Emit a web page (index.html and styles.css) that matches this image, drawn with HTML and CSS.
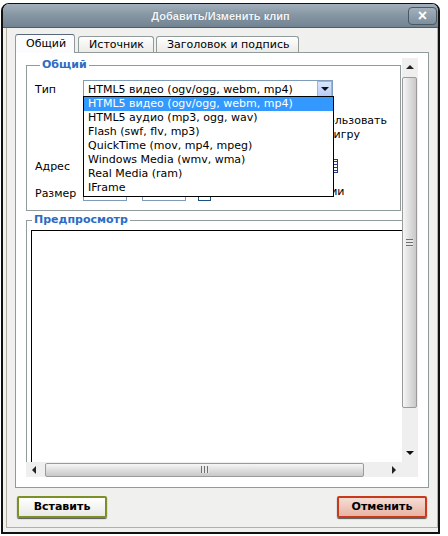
FILE: index.html
```html
<!DOCTYPE html>
<html lang="ru">
<head>
<meta charset="utf-8">
<title>Добавить/Изменить клип</title>
<link rel="stylesheet" href="styles.css">
</head>
<body>
<div class="window">
  <div class="titlebar">
    <span class="spacer"></span>
    <span class="title">Добавить/Изменить клип</span>
    <span class="close">×</span>
  </div>
  <div class="frame">
    <div class="tabs">
      <span class="tab active">Общий</span>
      <span class="tab">Источник</span>
      <span class="tab">Заголовок и подпись</span>
    </div>
    <div class="panel">
      <div class="scroller">
        <div class="viewport">
          <fieldset class="fs fs-general">
            <legend>Общий</legend>
            <div class="row row-type">
              <span class="lbl">Тип</span>
              <div class="select">
                <span class="select-text">HTML5 видео (ogv/ogg, webm, mp4)</span>
                <span class="select-btn"><span class="tri-down"></span></span>
                <ul class="listbox">
                  <li class="sel">HTML5 видео (ogv/ogg, webm, mp4)</li>
                  <li>HTML5 аудио (mp3, ogg, wav)</li>
                  <li>Flash (swf, flv, mp3)</li>
                  <li>QuickTime (mov, mp4, mpeg)</li>
                  <li>Windows Media (wmv, wma)</li>
                  <li>Real Media (ram)</li>
                  <li>IFrame</li>
                </ul>
              </div>
            </div>
            <div class="row row-opts">
              <div class="opt-line l1">Использовать</div>
              <div class="opt-line l2">проигру</div>
            </div>
            <div class="row row-url">
              <span class="lbl">Адрес</span>
              <span class="input url"></span>
              <svg class="browse" width="14" height="14" viewBox="0 0 14 14">
                <rect x="0.5" y="0.5" width="13" height="13" fill="#fff" stroke="#2a3f7a"/>
                <path d="M9 2.5h4M9 5.5h4M9 8.5h4M9 11.5h4" stroke="#2a3f7a" stroke-width="1"/>
                <path d="M3 4h4M3 7h4M3 10h4" stroke="#6d7fae" stroke-width="1"/>
              </svg>
            </div>
            <div class="row row-size">
              <span class="lbl">Размер</span>
              <span class="input num"></span>
              <span class="times">x</span>
              <span class="input num"></span>
              <span class="check"></span>
              <span class="keep">Сохранять пропорции</span>
            </div>
          </fieldset>
          <fieldset class="fs fs-preview">
            <legend>Предпросмотр</legend>
            <div class="preview"></div>
          </fieldset>
        </div>
        <div class="vbar">
          <span class="sb-btn v"><span class="tri-up"></span></span>
          <span class="thumb-v"><span class="grip-v"></span></span>
          <span class="sb-btn v down"><span class="tri-down"></span></span>
        </div>
        <div class="hbar">
          <span class="sb-btn h"><span class="tri-left"></span></span>
          <span class="thumb-h"><span class="grip-h"></span></span>
          <span class="sb-btn h right"><span class="tri-right"></span></span>
        </div>
        <div class="corner"></div>
      </div>
    </div>
    <div class="buttons">
      <span class="btn insert">Вставить</span>
      <span class="btn cancel">Отменить</span>
    </div>
  </div>
</div>
</body>
</html>
```
FILE: styles.css
```css
* { box-sizing: border-box; }
html, body { margin: 0; padding: 0; }
body {
  background: #fff;
  font-family: "DejaVu Sans", Verdana, sans-serif;
  font-size: 11px;
  color: #000;
  width: 448px;
  height: 536px;
  overflow: hidden;
}

.window {
  margin: 3px 0 0 1px;
  width: 439px;
  height: 531px;
  border: 2px solid #111;
  border-top-width: 1px;
  border-radius: 8px 8px 0 0;
  background: #f0f0ee;
  overflow: hidden;
  display: flex;
  flex-direction: column;
}

.titlebar {
  height: 24px;
  flex: none;
  display: grid;
  grid-template-columns: 31px 1fr 31px;
  align-items: center;
  background: linear-gradient(#a2b0bc, #8797a4 45%, #728392);
  border-bottom: 1px solid #4e5d69;
}
.title {
  text-align: center;
  font-family: "Liberation Sans", Arial, sans-serif;
  font-weight: bold;
  font-size: 11px;
  color: #f2f5f8;
  text-shadow: 0 0 1px #56656f;
}
.close {
  justify-self: start;
  margin-left: 1px;
  width: 29px;
  height: 18px;
  border: 1px solid #4a5864;
  border-radius: 4px;
  background: linear-gradient(#a3b1bd, #7d8e9c);
  color: #fff;
  font-family: "Liberation Sans", Arial, sans-serif;
  font-weight: bold;
  font-size: 16px;
  line-height: 15px;
  text-align: center;
}

.frame {
  flex: 1;
  margin: 0 0 4px 3px;
  border: 1px solid #b8afa2;
  border-top: none;
  padding: 6px 0 0 8px;
}

.tabs {
  display: flex;
  align-items: flex-end;
  height: 18px;
}
.tab {
  height: 16px;
  line-height: 15px;
  padding: 0 9px 0 10px;
  margin-right: 2px;
  border: 1px solid #919b9c;
  border-bottom: none;
  border-radius: 3px 3px 0 0;
  background: linear-gradient(#fefefe, #ecebe6);
  white-space: nowrap;
}
.tab.active {
  position: relative;
  z-index: 1;
  height: 19px;
  margin-bottom: -1px;
  margin-right: 3px;
  padding: 0 8px 0 10px;
  line-height: 17px;
  border-top: 1px solid #56687a;
  background: #fcfcfe;
}

.panel {
  width: 414px;
  height: 436px;
  border: 1px solid #919b9c;
  background: #fff;
  padding: 5px 9px 0 10px;
}

.scroller {
  display: grid;
  grid-template-columns: 376px 16px;
  grid-template-rows: 404px 15px;
  width: 392px;
}

.viewport {
  overflow: hidden;
  position: relative;
}

.fs {
  margin: 0;
  padding: 0;
  border: 1px solid #919b9c;
}
.fs legend {
  margin-left: 5px;
  padding: 0 2px;
  line-height: 14px;
  font-weight: bold;
  color: #2b6cc4;
}
.fs-general {
  width: 375px;
  padding: 0 0 8px 8px;
}
.fs-preview {
  width: 400px;
  margin-top: 2px;
  height: 320px;
}

.row {
  display: flex;
  align-items: center;
}
.lbl {
  width: 48px;
  flex: none;
}
.row-type { margin-top: 8px; height: 18px; }
.row-opts {
  margin-top: 16px;
  height: 28px;
  flex-direction: column;
  align-items: stretch;
  padding-left: 48px;
}
.opt-line { height: 14px; line-height: 14px; text-align: right; white-space: nowrap; }
.opt-line.l1 { width: 304px; }
.opt-line.l2 { width: 277px; }
.row-url { margin-top: 16px; height: 16px; }
.row-size { margin-top: 11px; height: 17px; align-items: flex-start; }
.row-size .keep, .row-size .times { line-height: 14px; }
.row-size .lbl { line-height: 14px; padding-top: 2px; }

.select {
  position: relative;
  width: 250px;
  height: 18px;
  border: 1px solid #7f9db9;
  background: #fff;
  display: flex;
  align-items: center;
  padding-left: 4px;
}
.select-text { flex: 1; white-space: nowrap; line-height: 15px; }
.select-btn {
  width: 15px;
  height: 16px;
  border: 1px solid #9cb4de;
  background: linear-gradient(#d9e5fc, #b9cdf7);
  display: flex;
  align-items: center;
  justify-content: center;
}
.tri-down, .tri-up, .tri-left, .tri-right { width: 0; height: 0; display: block; }
.tri-down { border-left: 4px solid transparent; border-right: 4px solid transparent; border-top: 4px solid #111; }
.tri-up { border-left: 4px solid transparent; border-right: 4px solid transparent; border-bottom: 4px solid #222; }
.tri-left { border-top: 4px solid transparent; border-bottom: 4px solid transparent; border-right: 4px solid #222; }
.tri-right { border-top: 4px solid transparent; border-bottom: 4px solid transparent; border-left: 4px solid #222; }

.listbox {
  position: absolute;
  z-index: 5;
  top: calc(100% - 1px);
  left: -1px;
  width: 251px;
  margin: 0;
  padding: 0 0 1px;
  list-style: none;
  border: 1px solid #000;
  background: #fff;
}
.listbox li {
  height: 14px;
  line-height: 14px;
  padding-left: 4px;
  white-space: nowrap;
}
.listbox li.sel { background: #3399ff; color: #fff; }

.input {
  height: 16px;
  border: 1px solid #7f9db9;
  background: #fff;
  flex: none;
}
.input.url { width: 238px; }
.browse { margin-left: 3px; flex: none; }
.input.num { width: 44px; }
.times { width: 15px; text-align: center; }
.check {
  width: 13px;
  height: 13px;
  margin: 3px 5px 0 12px;
  border: 1px solid #1c5180;
  background: #fff;
  flex: none;
}
.keep { white-space: nowrap; }

.preview {
  margin: 3px 0 0 4px;
  width: 384px;
  height: 300px;
  border: 1px solid #000;
  background: #fff;
}

.vbar {
  background: #efefef;
  display: flex;
  flex-direction: column;
}
.sb-btn {
  display: flex;
  align-items: center;
  justify-content: center;
  flex: none;
}
.sb-btn.v { height: 17px; width: 15px; }
.sb-btn.v.down { margin-top: auto; height: 18px; }
.thumb-v {
  margin-top: 2px;
  width: 15px;
  height: 331px;
  border: 1px solid #9a9a9a;
  border-radius: 2px;
  background: linear-gradient(to right, #f6f6f6, #dcdcdc 55%, #c8c8c8);
  display: flex;
  align-items: center;
  justify-content: center;
}
.grip-v {
  width: 7px;
  height: 8px;
  background: repeating-linear-gradient(#6f6f6f 0 1px, #e8e8e8 1px 3px);
}
.hbar {
  background: #efefef;
  display: flex;
  align-items: center;
}
.sb-btn.h { width: 16px; height: 15px; }
.sb-btn.h.right { margin-left: auto; }
.thumb-h {
  margin-left: 3px;
  width: 319px;
  height: 14px;
  border: 1px solid #9a9a9a;
  border-radius: 2px;
  background: linear-gradient(#f6f6f6, #dcdcdc 55%, #c8c8c8);
  display: flex;
  align-items: center;
  justify-content: center;
}
.grip-h {
  width: 8px;
  height: 7px;
  background: repeating-linear-gradient(to right, #6f6f6f 0 1px, #e8e8e8 1px 3px);
}
.corner { background: #efefef; }

.buttons {
  width: 414px;
  margin-top: 8px;
  padding: 0 2px;
  display: flex;
  justify-content: space-between;
}
.btn {
  width: 90px;
  height: 22px;
  line-height: 18px;
  text-align: center;
  font-weight: bold;
  border: 2px solid;
  border-radius: 2px;
  box-shadow: 0 1px 1px #555;
}
.btn.insert {
  border-color: #7b9128;
  background: linear-gradient(#ffffff, #e9e9e6);
}
.btn.cancel {
  border-color: #c83a1c;
  background: linear-gradient(#f6ddd5, #e8b3a4);
}
```
